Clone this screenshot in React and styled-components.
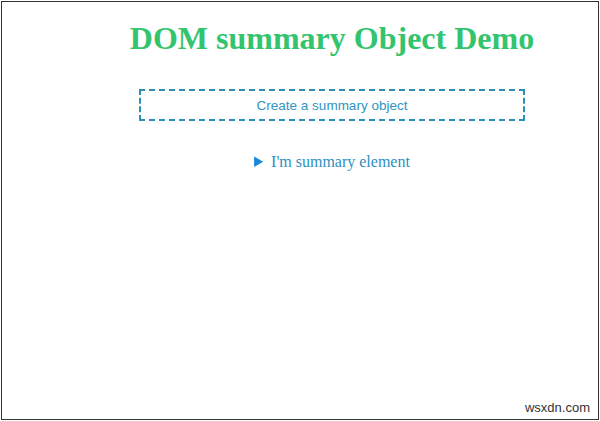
import React from 'react';
import styled, { createGlobalStyle } from 'styled-components';

const GlobalStyle = createGlobalStyle`
  html, body {
    margin: 0;
    padding: 0;
    background: #fff;
  }
  * {
    box-sizing: border-box;
  }
`;

const Frame = styled.div`
  position: relative;
  width: 598px;
  height: 419px;
  margin: 1px 0 0 1px;
  border: 1px solid #333;
  background: #fff;
  padding-top: 18px;
`;

const Content = styled.div`
  margin-left: 64px;
  display: flex;
  flex-direction: column;
  align-items: center;
`;

const Title = styled.h1`
  margin: 0;
  font-family: "Liberation Serif", "Times New Roman", serif;
  font-size: 32px;
  line-height: 37px;
  font-weight: bold;
  color: #34c46f;
`;

const CreateButton = styled.button`
  margin-top: 32px;
  width: 386px;
  height: 32px;
  background: #fff;
  border: 2px dashed #2b8fb8;
  font-family: "Liberation Sans", Arial, sans-serif;
  font-size: 13.5px;
  color: #3294c0;
  cursor: pointer;
`;

const Details = styled.details`
  margin-top: 32px;
  font-family: "Liberation Serif", "Times New Roman", serif;
  font-size: 16px;
  color: #2d8fc3;
`;

const Summary = styled.summary`
  cursor: pointer;
  &::marker {
    color: #1a86d8;
  }
`;

const Watermark = styled.span`
  position: absolute;
  right: 8px;
  bottom: 4px;
  font-family: "Liberation Sans", Arial, sans-serif;
  font-size: 13px;
  color: #333;
`;

const App = () => (
  <>
    <GlobalStyle />
    <Frame>
      <Content>
        <Title>DOM summary Object Demo</Title>
        <CreateButton>Create a summary object</CreateButton>
        <Details>
          <Summary>I'm summary element</Summary>
        </Details>
      </Content>
      <Watermark>wsxdn.com</Watermark>
    </Frame>
  </>
);

export default App;
